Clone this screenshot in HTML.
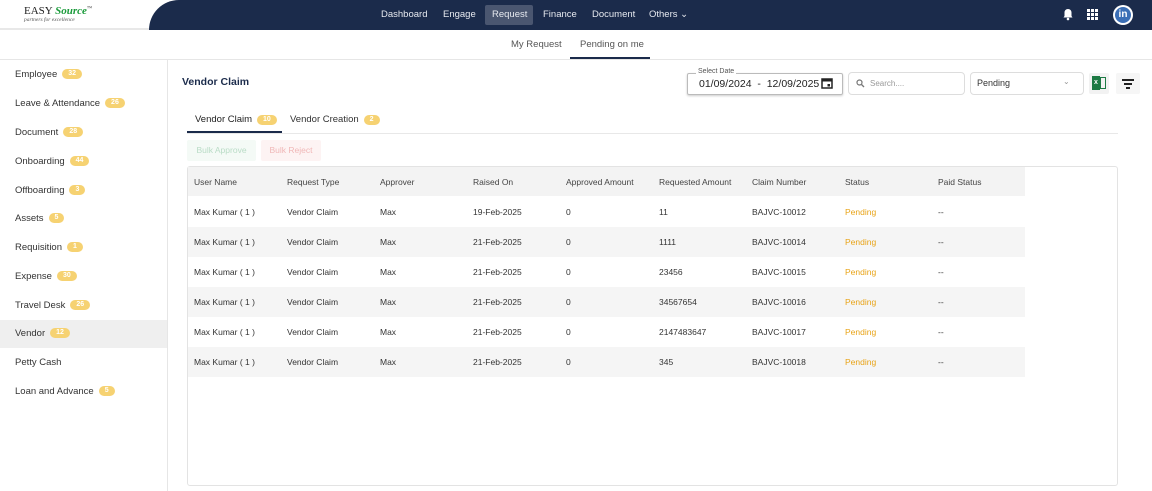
<!DOCTYPE html>
<html><head><meta charset="utf-8"><style>
*{box-sizing:border-box;margin:0;padding:0}
body{width:1152px;height:491px;overflow:hidden;font-family:"Liberation Sans",sans-serif;background:#fff;color:#333;position:relative;font-size:9px}
.abs{position:absolute}
.top{left:0;top:0;width:1152px;height:30px;background:#fff;border-bottom:2px solid #e8e8e8}
.navy{left:149px;top:0;width:1003px;height:30px;background:#1b2b4b;border-top-left-radius:30px 30px}
.nav a{position:absolute;top:0;height:30px;line-height:29px;color:#e6e9ef;font-size:9.5px}
.badge{display:inline-block;background:#f6d272;color:#fff;border-radius:6px;font-size:7px;line-height:10px;padding:0 6px;margin-left:5px;vertical-align:1px;font-weight:bold}
.side div{position:absolute;left:0;width:167px;height:28px;line-height:27px;padding-left:15px;font-size:9.5px;color:#333}
th,td{text-align:left;font-weight:normal;padding-left:6px;width:93px;height:30px;font-size:8.5px;white-space:nowrap;overflow:hidden}
th{color:#444}
table{border-collapse:collapse;position:absolute;left:188px;top:167px;table-layout:fixed;width:837px}
tr:nth-child(odd) td{background:#f5f5f5}
tr:nth-child(even) td{background:#fff}
.p{color:#e8a317}
</style></head><body>
<div class="abs top"></div>
<div class="abs" style="left:24px;top:5px;font-family:'Liberation Serif',serif;font-size:11px;color:#222">EASY <i style="color:#1a9a3a;font-weight:bold">Source</i><sup style="font-size:5px">™</sup></div>
<div class="abs" style="left:24px;top:17px;font-family:'Liberation Serif',serif;font-size:5.5px;font-style:italic;color:#555">partners for excellence</div>
<div class="abs navy"></div>
<div class="nav">
<a style="left:381px">Dashboard</a><a style="left:443px">Engage</a>
<span class="abs" style="left:485px;top:5px;width:48px;height:20px;background:#4a5670;border-radius:2px"></span>
<a style="left:492px">Request</a><a style="left:543px">Finance</a><a style="left:592px">Document</a><a style="left:649px">Others ⌄</a>
</div>
<svg class="abs" style="left:1062px;top:8px" width="12" height="13" viewBox="0 0 12 13"><path d="M6 1c-2 0-3.5 1.5-3.5 3.5V8L1.5 9.5h9L9.5 8V4.5C9.5 2.5 8 1 6 1z" fill="#fff"/><circle cx="6" cy="11" r="1.3" fill="#fff"/></svg>
<svg class="abs" style="left:1087px;top:9px" width="11" height="11"><g fill="#fff"><rect x="0" y="0" width="3" height="3"/><rect x="4" y="0" width="3" height="3"/><rect x="8" y="0" width="3" height="3"/><rect x="0" y="4" width="3" height="3"/><rect x="4" y="4" width="3" height="3"/><rect x="8" y="4" width="3" height="3"/><rect x="0" y="8" width="3" height="3"/><rect x="4" y="8" width="3" height="3"/><rect x="8" y="8" width="3" height="3"/></g></svg>
<div class="abs" style="left:1113px;top:5px;width:20px;height:20px;border-radius:50%;background:#fff;padding:2px"><div style="width:16px;height:16px;border-radius:50%;background:#3b6fb6;color:#fff;font-weight:bold;font-size:10px;text-align:center;line-height:16px">in</div></div>
<div class="abs" style="left:0;top:59px;width:1152px;height:1px;background:#e6e6e6"></div>
<div class="abs" style="left:511px;top:39px;font-size:9.5px;color:#555">My Request</div>
<div class="abs" style="left:580px;top:39px;font-size:9.5px;color:#555">Pending on me</div>
<div class="abs" style="left:570px;top:57px;width:80px;height:2px;background:#1b2b4b"></div>
<div class="abs" style="left:167px;top:60px;width:1px;height:431px;background:#e6e6e6"></div>
<div class="abs" style="left:0;top:320px;width:167px;height:28px;background:#efefef"></div>
<div class="side">
<div style="top:61px">Employee<span class="badge">32</span></div>
<div style="top:90px">Leave &amp; Attendance<span class="badge">26</span></div>
<div style="top:119px">Document<span class="badge">28</span></div>
<div style="top:148px">Onboarding<span class="badge">44</span></div>
<div style="top:177px">Offboarding<span class="badge">3</span></div>
<div style="top:205px">Assets<span class="badge">5</span></div>
<div style="top:234px">Requisition<span class="badge">1</span></div>
<div style="top:263px">Expense<span class="badge">30</span></div>
<div style="top:292px">Travel Desk<span class="badge">26</span></div>
<div style="top:320px">Vendor<span class="badge">12</span></div>
<div style="top:349px">Petty Cash</div>
<div style="top:378px">Loan and Advance<span class="badge">5</span></div>
</div>
<div class="abs" style="left:182px;top:76px;font-size:10.5px;font-weight:bold;color:#1b2b4b">Vendor Claim</div>
<div class="abs" style="left:687px;top:73px;width:156px;height:22px;border:1px solid #bbb;border-radius:2px;box-shadow:0 1px 2px #ccc"></div>
<div class="abs" style="left:696px;top:68px;background:#fff;padding:0 2px;font-size:7px;color:#555">Select Date</div>
<div class="abs" style="left:699px;top:78px;font-size:10.5px;color:#222">01/09/2024 &nbsp;- &nbsp;12/09/2025</div>
<svg class="abs" style="left:821px;top:77px" width="12" height="12"><rect x="1" y="2" width="10" height="9" fill="none" stroke="#222" stroke-width="1.5"/><rect x="1" y="2" width="10" height="2.5" fill="#222"/><rect x="6.5" y="7" width="2.5" height="2.5" fill="#222"/></svg>
<div class="abs" style="left:848px;top:72px;width:117px;height:23px;border:1px solid #ddd;border-radius:4px"></div>
<svg class="abs" style="left:856px;top:79px" width="9" height="9"><circle cx="3.5" cy="3.5" r="2.5" fill="none" stroke="#777" stroke-width="1.2"/><path d="M5.5 5.5L8 8" stroke="#777" stroke-width="1.3"/></svg>
<div class="abs" style="left:870px;top:79px;font-size:8px;color:#999">Search....</div>
<div class="abs" style="left:970px;top:72px;width:114px;height:23px;border:1px solid #ddd;border-radius:4px"></div>
<div class="abs" style="left:977px;top:78px;font-size:9px;color:#333">Pending</div>
<div class="abs" style="left:1063px;top:77px;font-size:8px;color:#999">⌄</div>
<div class="abs" style="left:1089px;top:73px;width:20px;height:21px;background:#f2f2f2;border-radius:2px"></div>
<div class="abs" style="left:1092px;top:76px;width:8px;height:14px;background:#1d7a44;color:#fff;font-size:7px;font-weight:bold;text-align:center;line-height:14px">x</div>
<div class="abs" style="left:1100px;top:77px;width:6px;height:12px;border:1px solid #1d7a44"></div>
<div class="abs" style="left:1116px;top:73px;width:24px;height:21px;background:#f6f6f6;border-radius:2px"></div>
<div class="abs" style="left:1122px;top:79px;width:12px;height:1.5px;background:#222"></div>
<div class="abs" style="left:1124px;top:83px;width:8px;height:1.5px;background:#222"></div>
<div class="abs" style="left:1126px;top:87px;width:4px;height:1.5px;background:#222"></div>
<div class="abs" style="left:187px;top:133px;width:931px;height:1px;background:#e8e8e8"></div>
<div class="abs" style="left:195px;top:114px;font-size:9.5px;color:#222">Vendor Claim<span class="badge">10</span></div>
<div class="abs" style="left:187px;top:131px;width:95px;height:2px;background:#1b2b4b"></div>
<div class="abs" style="left:290px;top:114px;font-size:9.5px;color:#333">Vendor Creation<span class="badge">2</span></div>
<div class="abs" style="left:187px;top:140px;width:69px;height:21px;background:#f4faf6;color:#b9dcc6;font-size:8.5px;text-align:center;line-height:21px;border-radius:2px">Bulk Approve</div>
<div class="abs" style="left:261px;top:140px;width:60px;height:21px;background:#fdf3f3;color:#f0b7b7;font-size:8.5px;text-align:center;line-height:21px;border-radius:2px">Bulk Reject</div>
<div class="abs" style="left:187px;top:166px;width:931px;height:320px;border:1px solid #e3e3e3;border-radius:3px"></div>
<div class="abs" style="left:188px;top:167px;width:837px;height:29px;background:#f3f3f3"></div>
<table>
<tr><th>User Name</th><th>Request Type</th><th>Approver</th><th>Raised On</th><th>Approved Amount</th><th>Requested Amount</th><th>Claim Number</th><th>Status</th><th>Paid Status</th></tr>
<tr><td>Max Kumar ( 1 )</td><td>Vendor Claim</td><td>Max</td><td>19-Feb-2025</td><td>0</td><td>11</td><td>BAJVC-10012</td><td class="p">Pending</td><td>--</td></tr>
<tr><td>Max Kumar ( 1 )</td><td>Vendor Claim</td><td>Max</td><td>21-Feb-2025</td><td>0</td><td>1111</td><td>BAJVC-10014</td><td class="p">Pending</td><td>--</td></tr>
<tr><td>Max Kumar ( 1 )</td><td>Vendor Claim</td><td>Max</td><td>21-Feb-2025</td><td>0</td><td>23456</td><td>BAJVC-10015</td><td class="p">Pending</td><td>--</td></tr>
<tr><td>Max Kumar ( 1 )</td><td>Vendor Claim</td><td>Max</td><td>21-Feb-2025</td><td>0</td><td>34567654</td><td>BAJVC-10016</td><td class="p">Pending</td><td>--</td></tr>
<tr><td>Max Kumar ( 1 )</td><td>Vendor Claim</td><td>Max</td><td>21-Feb-2025</td><td>0</td><td>2147483647</td><td>BAJVC-10017</td><td class="p">Pending</td><td>--</td></tr>
<tr><td>Max Kumar ( 1 )</td><td>Vendor Claim</td><td>Max</td><td>21-Feb-2025</td><td>0</td><td>345</td><td>BAJVC-10018</td><td class="p">Pending</td><td>--</td></tr>
</table>
<style>tr:first-child th{background:transparent}.side .badge{vertical-align:middle}</style>
</body></html>
